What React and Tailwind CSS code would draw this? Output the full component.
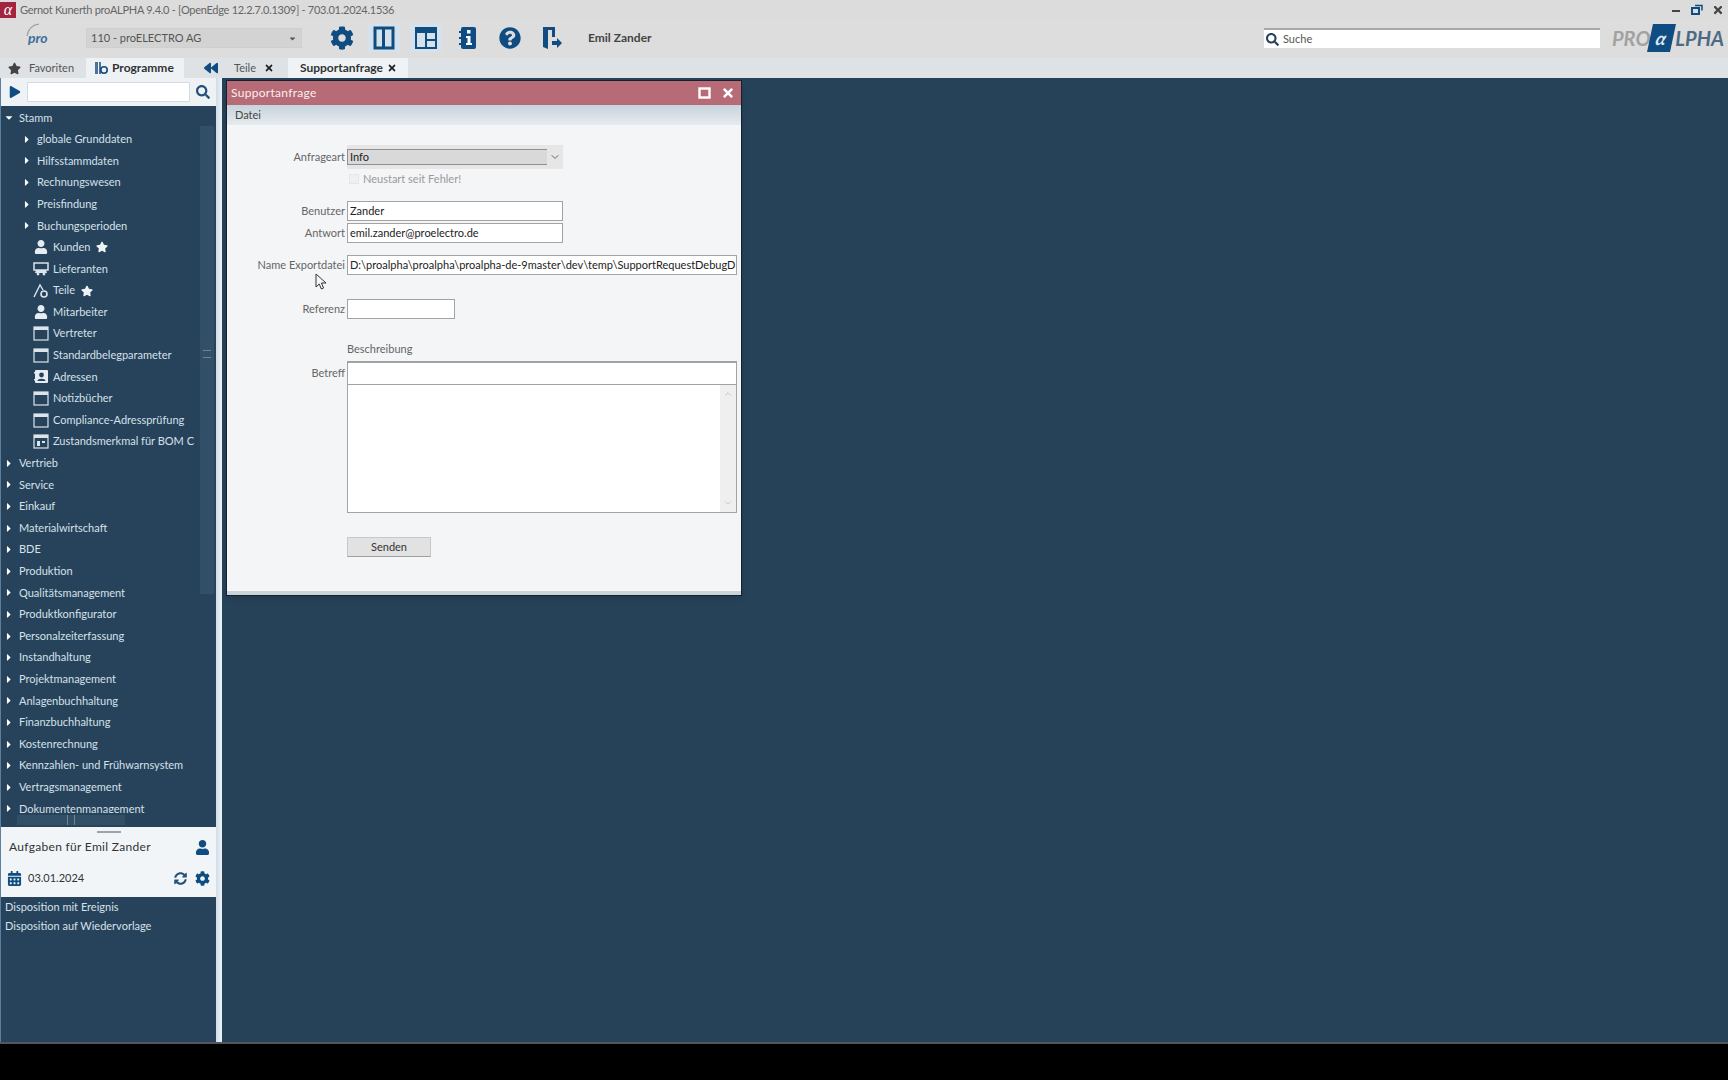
import {
  FaBackward,
  FaCalendarAlt,
  FaCaretDown,
  FaCaretRight,
  FaCog,
  FaPlay,
  FaQuestionCircle,
  FaSearch,
  FaStar,
  FaSyncAlt,
  FaTimes,
  FaUser,
} from "react-icons/fa";
import { ChevronDown, ChevronUp } from "lucide-react";

const blue = "#0f4c81";

// Toolbar drawings
function PanelColumns() {
  return (
    <svg width="22" height="24" viewBox="0 0 22 24">
      <rect x="2" y="2" width="18" height="20" fill="none" stroke={blue} strokeWidth="3" />
      <rect x="9" y="2" width="3" height="20" fill={blue} />
    </svg>
  );
}

function PanelLayout() {
  return (
    <svg width="24" height="24" viewBox="0 0 24 24">
      <rect x="2" y="2" width="20" height="20" fill="none" stroke={blue} strokeWidth="2" />
      <rect x="2" y="2" width="20" height="5" fill={blue} />
      <rect x="11" y="7" width="2" height="15" fill={blue} />
      <rect x="11" y="13" width="10" height="2" fill={blue} />
    </svg>
  );
}

function InfoBook() {
  return (
    <svg width="20" height="24" viewBox="0 0 20 24">
      <rect x="3" y="1" width="15" height="22" rx="2" fill={blue} />
      <rect x="1" y="5" width="3" height="2" fill={blue} />
      <rect x="1" y="11" width="3" height="2" fill={blue} />
      <rect x="1" y="17" width="3" height="2" fill={blue} />
      <rect x="9" y="4" width="3.5" height="3.5" fill="white" />
      <path d="M8 10h4.5v7H14v2H8v-2h1.5v-5H8z" fill="white" />
    </svg>
  );
}

function ExitDoor() {
  return (
    <svg width="24" height="24" viewBox="0 0 24 24">
      <path d="M3 1h12v10h-3V4H8v19l-5-2z" fill={blue} />
      <path d="M12 15h5v-3l5 5-5 5v-3h-5z" fill={blue} />
    </svg>
  );
}

// Tree drawings
function WindowIcon() {
  return (
    <svg width="16" height="15" viewBox="0 0 16 15">
      <rect x="1" y="1" width="14" height="13" fill="none" stroke="#dbe4ea" strokeWidth="1.2" />
      <rect x="1" y="1" width="14" height="3" fill="#dbe4ea" />
    </svg>
  );
}

function FormIcon() {
  return (
    <svg width="16" height="15" viewBox="0 0 16 15">
      <rect x="1" y="1" width="14" height="13" fill="none" stroke="#dbe4ea" strokeWidth="1.2" />
      <rect x="1" y="1" width="14" height="3" fill="#dbe4ea" />
      <rect x="4" y="7" width="3" height="5" fill="#dbe4ea" />
      <rect x="9" y="7" width="3" height="2" fill="#dbe4ea" />
    </svg>
  );
}

function TruckIcon() {
  return (
    <svg width="16" height="15" viewBox="0 0 16 15">
      <path d="M1 2h14v7H1z" fill="none" stroke="#dbe4ea" strokeWidth="1.5" />
      <path d="M3 9h10l1 3H2z" fill="#dbe4ea" />
      <circle cx="5" cy="13" r="1.4" fill="#dbe4ea" />
      <circle cx="11" cy="13" r="1.4" fill="#dbe4ea" />
    </svg>
  );
}

function PartIcon() {
  return (
    <svg width="16" height="16" viewBox="0 0 16 16">
      <path d="M1 14L7 2l3 5" fill="none" stroke="#dbe4ea" strokeWidth="1.4" />
      <circle cx="11" cy="11" r="3" fill="none" stroke="#dbe4ea" strokeWidth="1.6" />
    </svg>
  );
}

function AddressIcon() {
  return (
    <svg width="16" height="15" viewBox="0 0 16 15">
      <rect x="2" y="1" width="13" height="13" rx="1" fill="#e6edf2" />
      <circle cx="8.5" cy="6" r="2.4" fill="#27435c" />
      <path d="M4.5 12c0-3 8-3 8 0z" fill="#27435c" />
      <rect x="1" y="3" width="2" height="1.5" fill="#e6edf2" />
      <rect x="1" y="10" width="2" height="1.5" fill="#e6edf2" />
    </svg>
  );
}

const user = <FaUser size={14} className="text-[#e6edf2]" />;

const modules = [
  "Vertrieb",
  "Service",
  "Einkauf",
  "Materialwirtschaft",
  "BDE",
  "Produktion",
  "Qualitätsmanagement",
  "Produktkonfigurator",
  "Personalzeiterfassung",
  "Instandhaltung",
  "Projektmanagement",
  "Anlagenbuchhaltung",
  "Finanzbuchhaltung",
  "Kostenrechnung",
  "Kennzahlen- und Frühwarnsystem",
  "Vertragsmanagement",
  "Dokumentenmanagement",
];

const folders = ["globale Grunddaten", "Hilfsstammdaten", "Rechnungswesen", "Preisfindung", "Buchungsperioden"];

const programs = [
  { name: "Kunden", icon: user, star: true },
  { name: "Lieferanten", icon: <TruckIcon /> },
  { name: "Teile", icon: <PartIcon />, star: true },
  { name: "Mitarbeiter", icon: user },
  { name: "Vertreter", icon: <WindowIcon /> },
  { name: "Standardbelegparameter", icon: <WindowIcon /> },
  { name: "Adressen", icon: <AddressIcon /> },
  { name: "Notizbücher", icon: <WindowIcon /> },
  { name: "Compliance-Adressprüfung", icon: <WindowIcon /> },
  { name: "Zustandsmerkmal für BOM C", icon: <FormIcon /> },
];

function Row({ className, children }) {
  return <div className={`flex h-[21.6px] shrink-0 items-center whitespace-nowrap ${className}`}>{children}</div>;
}

function Sidebar() {
  return (
    <aside className="flex w-[216px] shrink-0 flex-col border-l border-[#5b7f9c] bg-[#27435c]">
      <div className="flex h-7 shrink-0 items-center gap-1.5 bg-[#eef2f5] pl-2 pr-1.5">
        <FaPlay size={12} style={{ color: blue }} />
        <div className="h-5 flex-1 border border-[#d5dbe0] bg-white" />
        <FaSearch size={14} className="text-[#24527a]" />
      </div>

      <div className="flex h-[721px] shrink-0 flex-col text-[#d6e0e8]">
        <div className="flex min-h-0 flex-1">
          <div className="min-w-0 flex-1 overflow-hidden pt-px">
            <Row className="pl-0.5">
              <FaCaretDown size={11} className="w-3 text-white" />
              <span className="ml-1">Stamm</span>
            </Row>
            {folders.map((f) => (
              <Row key={f} className="pl-5">
                <FaCaretRight size={11} className="w-3 text-white" />
                <span className="ml-1">{f}</span>
              </Row>
            ))}
            {programs.map((p) => (
              <Row key={p.name} className="pl-8">
                <span className="flex w-4 justify-center">{p.icon}</span>
                <span className="ml-1">{p.name}</span>
                {p.star && <FaStar size={12} className="ml-1.5 text-[#eef3f6]" />}
              </Row>
            ))}
            {modules.map((m) => (
              <Row key={m} className="pl-0.5">
                <FaCaretRight size={11} className="w-3 text-white" />
                <span className="ml-1">{m}</span>
              </Row>
            ))}
          </div>
          {/* vertical scrollbar */}
          <div className="flex w-4 shrink-0 flex-col pt-5">
            <div className="flex h-[468px] w-3.5 flex-col items-center bg-[#324f68] pt-56">
              <div className="h-2 w-2 border-y border-[#6b8499]" />
            </div>
          </div>
        </div>
        {/* horizontal scrollbar */}
        <div className="h-3.5 shrink-0 pl-4 pt-0.5">
          <div className="flex h-2.5 w-27 justify-center bg-[#324f68]">
            <div className="w-2 border-x border-[#6b8499]" />
          </div>
        </div>
      </div>

      <div className="flex h-[70px] shrink-0 flex-col bg-[#f2f5f8] text-[#333]">
        <div className="flex h-2 justify-center pt-1">
          <div className="h-0.5 w-6 border-y border-[#9aa4ac]" />
        </div>
        <div className="flex h-6 items-center pl-2 pr-1.5 text-xs tracking-wide">
          <span>Aufgaben für Emil Zander</span>
          <FaUser size={15} className="ml-auto" style={{ color: blue }} />
        </div>
        <div className="flex flex-1 items-center pl-1.5 pr-1.5">
          <FaCalendarAlt size={15} style={{ color: blue }} />
          <span className="ml-1.5">03.01.2024</span>
          <FaSyncAlt size={13} className="ml-auto" style={{ color: "#24527a" }} />
          <FaCog size={15} className="ml-2" style={{ color: blue }} />
        </div>
      </div>

      <div className="flex-1 px-1 leading-[19px] text-[#d6e0e8]">
        <div>Disposition mit Ereignis</div>
        <div>Disposition auf Wiedervorlage</div>
      </div>
    </aside>
  );
}

function Label({ children }) {
  return <span className="w-28 shrink-0 text-right text-[#666]">{children}</span>;
}

function Field({ className, children }) {
  return (
    <div
      className={`flex h-5 items-center overflow-hidden whitespace-nowrap border border-[#a3a3a3] bg-white px-0.5 text-[#222] ${className}`}
    >
      {children}
    </div>
  );
}

function SupportWindow() {
  return (
    <section className="relative flex h-[516px] w-[516px] flex-col border border-[#15222e] bg-[#f3f5f7] shadow-md">
      <header className="flex h-6 shrink-0 items-center bg-[#b66b76] pl-1 pr-1.5 text-xs tracking-wide text-[#fbeef0]">
        <span>Supportanfrage</span>
        <svg width="13" height="12" viewBox="0 0 13 12" className="ml-auto">
          <rect x="1.5" y="1.5" width="10" height="9" fill="none" stroke="white" strokeWidth="2.4" />
        </svg>
        <FaTimes size={14} className="ml-2.5 text-white" />
      </header>
      <div className="flex h-5 shrink-0 items-center bg-gradient-to-b from-[#c7d3dc] to-[#e6ebef] pl-2 text-[#444]">
        Datei
      </div>

      <div className="flex flex-1 flex-col pl-1.5 pr-1">
        <div className="mt-5 flex h-6 items-center gap-0.5">
          <Label>Anfrageart</Label>
          <div className="flex h-6 w-54 items-center bg-[#e6e6e6]">
            <div className="flex h-4 flex-1 items-center border-y border-l border-[#8f8f8f] bg-[#d9d9d9] px-0.5 text-[#222]">
              Info
            </div>
            <div className="flex w-4 justify-center">
              <ChevronDown size={12} className="text-[#666]" />
            </div>
          </div>
        </div>
        <div className="flex h-5 items-center gap-0.5">
          <span className="w-28 shrink-0" />
          <span className="ml-0.5 h-2.5 w-2.5 border border-[#e4e6e8] bg-[#eef0f2]" />
          <span className="ml-0.5 text-[#9a9a9a]">Neustart seit Fehler!</span>
        </div>

        <div className="mt-3 flex items-center gap-0.5">
          <Label>Benutzer</Label>
          <Field className="w-54">Zander</Field>
        </div>
        <div className="mt-0.5 flex items-center gap-0.5">
          <Label>Antwort</Label>
          <Field className="w-54">emil.zander@proelectro.de</Field>
        </div>
        <div className="mt-3 flex items-center gap-0.5">
          <Label>Name Exportdatei</Label>
          <Field className="flex-1">D:\proalpha\proalpha\proalpha-de-9master\dev\temp\SupportRequestDebugD</Field>
        </div>
        <div className="mt-6 flex items-center gap-0.5">
          <Label>Referenz</Label>
          <Field className="w-27" />
        </div>

        <div className="mt-5 flex h-5 items-center gap-0.5">
          <span className="w-28 shrink-0" />
          <span className="text-[#666]">Beschreibung</span>
        </div>
        <div className="mt-0.5 flex h-6 items-center gap-0.5">
          <Label>Betreff</Label>
          <div className="h-6 flex-1 border border-[#a3a3a3] border-t-2 bg-white" />
        </div>
        <div className="flex h-32 gap-0.5">
          <span className="w-28 shrink-0" />
          <div className="flex flex-1 border border-t-0 border-[#a3a3a3] bg-white">
            <div className="flex-1" />
            <div className="flex w-4 flex-col items-center justify-between bg-[#efefef] py-1">
              <ChevronUp size={10} className="text-[#bbb]" />
              <ChevronDown size={10} className="text-[#bbb]" />
            </div>
          </div>
        </div>

        <div className="mt-6 flex gap-0.5">
          <span className="w-28 shrink-0" />
          <button className="h-5 w-21 border border-[#c9c9c9] border-b-[#9f9f9f] bg-[#e2e2e2] text-[#333]">
            Senden
          </button>
        </div>
      </div>
      <div className="h-1 shrink-0 bg-[#c8d3da]" />

      {/* mouse pointer */}
      <svg width="13" height="18" viewBox="0 0 13 18" className="absolute left-22 top-48">
        <path d="M1 1v13l3.2-3 2.2 5 2.2-1-2.2-5H11z" fill="#f7f7f7" stroke="#333" strokeWidth="1" />
      </svg>
    </section>
  );
}

function Logo() {
  return (
    <div className="flex w-28 items-center text-xl font-bold italic leading-none">
      <span className="text-[#a2a2a2]">PRO</span>
      <span
        className="flex h-7 w-6 -skew-x-12 items-center justify-center text-lg text-[#dfe8f0]"
        style={{ backgroundColor: blue }}
      >
        α
      </span>
      <span className="ml-0.5 text-[#4d6a84]">LPHA</span>
    </div>
  );
}

export default function App() {
  return (
    <div className="flex h-screen flex-col bg-[#dddddd] font-['Lato','Open_Sans',sans-serif] text-[11px]">
      <div className="flex h-5 shrink-0 items-center bg-[#dcdcdc]">
        <span className="flex h-4 w-4 items-center justify-center bg-[#a3243f] font-['Liberation_Serif',serif] text-base italic leading-none text-white">
          α
        </span>
        <span className="ml-1 tracking-tight text-[#666]">
          Gernot Kunerth proALPHA 9.4.0 - [OpenEdge 12.2.7.0.1309] - 703.01.2024.1536
        </span>
        <div className="ml-auto flex gap-px">
          <span className="flex w-5 justify-center">
            <span className="mt-1.5 h-0.5 w-2 bg-[#444]" />
          </span>
          <span className="flex w-5 justify-center">
            <svg width="12" height="11" viewBox="0 0 12 11">
              <rect x="1" y="4" width="7" height="6" fill="none" stroke={blue} strokeWidth="2" />
              <path d="M4 1.5h7v5" fill="none" stroke={blue} strokeWidth="1.5" />
            </svg>
          </span>
          <span className="flex w-5 justify-center">
            <FaTimes size={12} className="text-[#444]" />
          </span>
        </div>
      </div>

      <div className="flex h-9 shrink-0 items-center pl-7 pr-1">
        <div className="relative w-6.5 text-sm font-bold italic leading-none text-[#3d6f9f]">
          <svg width="14" height="14" viewBox="0 0 14 14" className="absolute -left-0.5 -top-2">
            <path d="M1 13C2 6 6 2 13 1" fill="none" stroke="#999" strokeWidth="1.2" />
          </svg>
          pro
        </div>
        <div className="ml-8 flex h-5 w-54 items-center border border-[#cfcfcf] bg-[#d3d3d3] px-1 text-[#555]">
          110 - proELECTRO AG
          <FaCaretDown size={9} className="ml-auto text-[#555]" />
        </div>
        <div className="ml-5 flex gap-0.5">
          <span className="flex h-7 w-10 items-center justify-center">
            <FaCog size={24} style={{ color: blue }} />
          </span>
          <span className="flex h-7 w-10 items-center justify-center">
            <span className="flex h-7 w-8 items-center justify-center bg-[#d5e2ec]">
              <PanelColumns />
            </span>
          </span>
          <span className="flex h-7 w-10 items-center justify-center">
            <span className="flex h-7 w-8 items-center justify-center bg-[#d5e2ec]">
              <PanelLayout />
            </span>
          </span>
          <span className="flex h-7 w-10 items-center justify-center">
            <InfoBook />
          </span>
          <span className="flex h-7 w-10 items-center justify-center">
            <FaQuestionCircle size={22} style={{ color: blue }} />
          </span>
          <span className="flex h-7 w-10 items-center justify-center">
            <ExitDoor />
          </span>
        </div>
        <span className="ml-4 text-xs font-bold text-[#444]">Emil Zander</span>
        <div className="ml-auto flex h-5 w-84 items-center gap-1 border-t-2 border-[#a8a8a8] bg-white pl-0.5 text-[#555]">
          <FaSearch size={13} className="text-[#24425c]" />
          Suche
        </div>
        <div className="ml-3">
          <Logo />
        </div>
      </div>

      <div className="mt-0.5 flex h-5 shrink-0 items-center bg-[#dfe2e4] text-[#555]">
        <div className="flex w-21.5 items-center gap-2 pl-2">
          <FaStar size={13} className="text-[#444]" />
          <span>Favoriten</span>
        </div>
        <div className="flex h-5 w-24.5 items-center gap-1 bg-[#eef2f5] pl-2 text-xs font-bold text-[#333]">
          <svg width="14" height="14" viewBox="0 0 14 14">
            <path d="M1 1h3v12H1zM5 1h2v12H5z" fill="#4f7394" />
            <circle cx="10" cy="9" r="3.2" fill="none" stroke={blue} strokeWidth="1.6" />
          </svg>
          <span>Programme</span>
        </div>
        <FaBackward size={14} className="ml-5" style={{ color: blue }} />
        <div className="ml-4 flex w-13 items-center">
          <span>Teile</span>
          <FaTimes size={10} className="ml-2 text-[#222]" />
        </div>
        <div className="ml-0.5 flex h-5 w-30 items-center bg-[#f0f3f5] pl-3 text-xs font-bold text-[#333]">
          <span>Supportanfrage</span>
          <FaTimes size={10} className="ml-1 text-[#222]" />
        </div>
      </div>

      <div className="flex min-h-0 flex-1 border-b-2 border-[#55555e]">
        <Sidebar />
        <div className="w-1.5 shrink-0 bg-gradient-to-r from-[#cfdde9] to-[#eef2f5]" />
        <main className="flex-1 bg-[#264259] pl-1 pt-0.5">
          <SupportWindow />
        </main>
      </div>

      <div className="h-9 shrink-0 bg-black" />
    </div>
  );
}
